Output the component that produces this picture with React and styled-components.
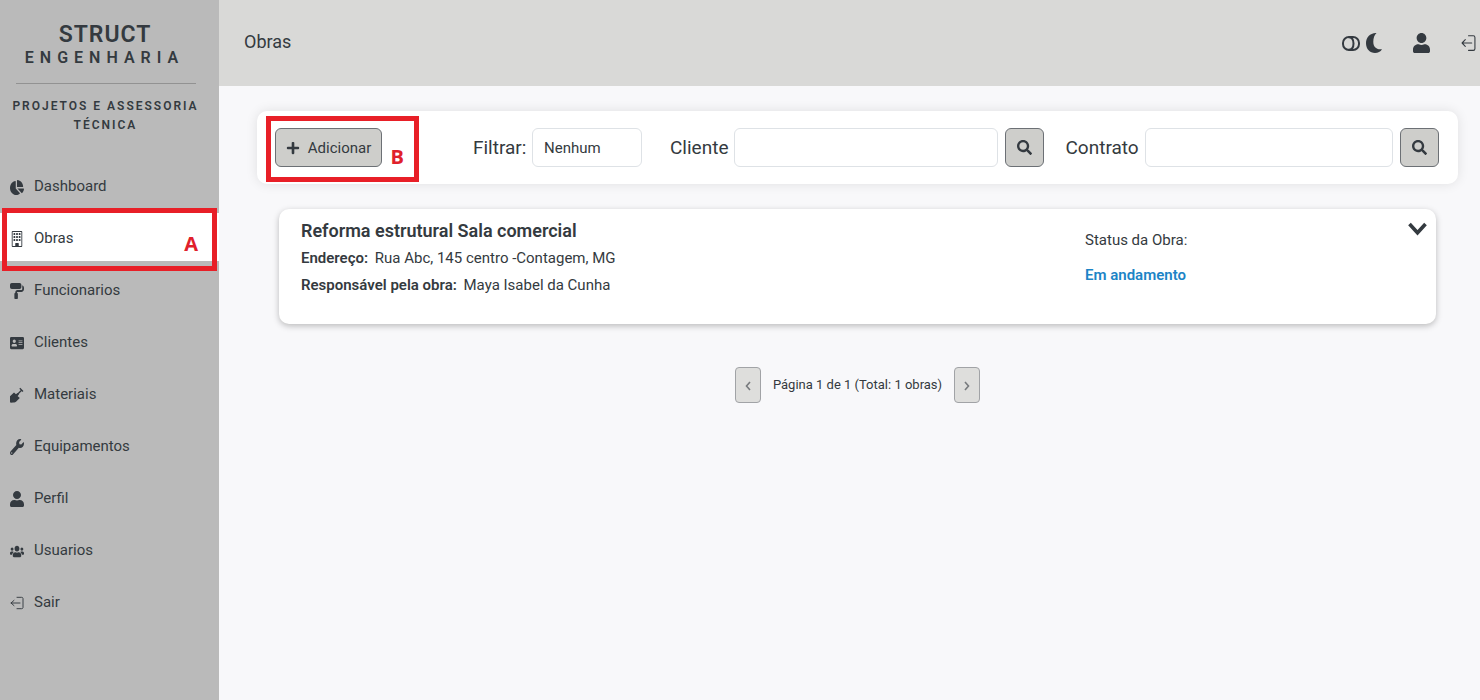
import React from "react";
import styled, { createGlobalStyle } from "styled-components";
import {
  FaAddressCard,
  FaChartPie,
  FaPlus,
  FaSearch,
  FaUser,
  FaUsers,
  FaWrench,
} from "react-icons/fa";
import { FaPaintRoller } from "react-icons/fa6";
import { BsBuilding } from "react-icons/bs";

const GlobalStyle = createGlobalStyle`
  *, *::before, *::after { box-sizing: border-box; }
  body {
    margin: 0;
    background: #f8f8fa;
    color: #343a40;
    font-family: Roboto, sans-serif;
    font-size: 15px;
    line-height: 24px;
  }
  button, input, select { font: inherit; color: inherit; }
  h1, h2, p { margin: 0; }
`;

const Layout = styled.div`
  display: flex;
  min-height: 100vh;
`;

const Sidebar = styled.aside`
  position: relative;
  flex: 0 0 219px;
  background: #bababa;
`;

const Brand = styled.div`
  height: 161px;
  padding-top: 25px;
  text-align: center;
`;

const BrandName = styled.p`
  padding-right: 9px;
  font-size: 23px;
  line-height: 20px;
  font-weight: 600;
  letter-spacing: 1px;
`;

const BrandSub = styled.p`
  padding: 3px 10px 0 0;
  font-size: 16px;
  line-height: 20px;
  font-weight: 600;
  letter-spacing: 6px;
`;

const BrandRule = styled.hr`
  width: 180px;
  margin: 15px 0 13px 16px;
  border: 0;
  border-top: 1px solid #929292;
`;

const Tagline = styled.p`
  padding-right: 8px;
  font-size: 12px;
  line-height: 19px;
  font-weight: 600;
  letter-spacing: 2px;
`;

const Nav = styled.nav`
  display: flex;
  flex-direction: column;
`;

const NavLink = styled.a`
  display: flex;
  align-items: center;
  gap: 10px;
  height: 48px;
  margin-bottom: 4px;
  padding: 4px 10px 0;
  color: inherit;
  text-decoration: none;
  background: ${(p) => (p.$active ? "#fff" : "transparent")};
  span { padding-bottom: 3px; }
`;

const Icon = styled.svg`
  flex: none;
  width: ${(p) => p.$width}px;
  height: ${(p) => p.$height}px;
`;

const Content = styled.div`
  flex: 1;
  min-width: 0;
`;

const Header = styled.header`
  display: flex;
  align-items: center;
  justify-content: space-between;
  height: 86px;
  padding: 0 4px 0 25px;
  background: #d9d9d7;
`;

const Title = styled.h1`
  padding-bottom: 3px;
  font-size: 18px;
  font-weight: 400;
`;

const HeaderActions = styled.div`
  display: flex;
  align-items: center;
  gap: 31px;
`;

const IconButton = styled.button`
  display: flex;
  align-items: center;
  gap: 6px;
  padding: 0;
  border: 0;
  background: none;
`;

const Main = styled.main`
  padding: 25px 22px 0 38px;
`;

const Toolbar = styled.section`
  display: flex;
  align-items: center;
  position: relative;
  height: 73px;
  padding: 0 19px 0 18px;
  background: #fff;
  border-radius: 10px;
  box-shadow: 0 0 12px rgba(0, 0, 0, 0.1);
`;

const Button = styled.button`
  display: flex;
  align-items: center;
  justify-content: center;
  gap: 8px;
  flex: none;
  width: ${(p) => p.$width}px;
  height: 39px;
  padding: 0;
  border: 1px solid #6c7075;
  border-radius: 6px;
  background: #cececb;
`;

const Field = styled.div`
  display: flex;
  align-items: center;
  flex: ${(p) => (p.$grow ? "1 1 0" : "none")};
  min-width: 0;
  margin-left: ${(p) => p.$gap}px;
`;

const Label = styled.label`
  flex: none;
  width: ${(p) => p.$width}px;
  font-size: 19px;
`;

const Select = styled.select`
  appearance: none;
  width: 110px;
  height: 39px;
  padding: 0 11px;
  border: 1px solid #dee2e6;
  border-radius: 6px;
  background: #fff;
`;

const Input = styled.input`
  flex: 1;
  min-width: 0;
  height: 39px;
  margin-right: 7px;
  padding: 0 12px;
  border: 1px solid #dee2e6;
  border-radius: 6px;
  background: #fff;
`;

const Card = styled.article`
  display: flex;
  align-items: flex-start;
  min-height: 115px;
  margin: 25px 22px 0;
  padding: 8px 9px 0 22px;
  background: #fff;
  border-radius: 10px;
  box-shadow: 0 2px 6px rgba(0, 0, 0, 0.25);
`;

const CardInfo = styled.div`
  flex: 1;
`;

const CardTitle = styled.h2`
  font-size: 18px;
  line-height: 28px;
  font-weight: 600;
`;

const CardLine = styled.p`
  line-height: 27px;
  strong { margin-right: 3px; font-weight: 600; }
`;

const CardStatus = styled.div`
  width: 323px;
  padding-top: 6px;
  line-height: 35px;
`;

const Status = styled.p`
  color: #1c84c6;
  font-weight: 600;
`;

const ExpandButton = styled(IconButton)`
  padding-top: 5px;
`;

const Pager = styled.nav`
  display: flex;
  align-items: center;
  justify-content: center;
  gap: 12px;
  margin-top: 43px;
  font-size: 13px;
`;

const PageButton = styled.button`
  display: flex;
  align-items: center;
  justify-content: center;
  width: 26px;
  height: 36px;
  padding: 2px 0 0;
  border: 1px solid #a1a3a6;
  border-radius: 4px;
  background: #dededc;
  color: #777a7d;
`;

const Highlight = styled.div`
  position: absolute;
  z-index: 1;
  left: ${(p) => p.$left}px;
  top: ${(p) => p.$top}px;
  width: ${(p) => p.$width}px;
  height: ${(p) => p.$height}px;
  border: 5px solid #e81f27;
  pointer-events: none;
`;

const Marker = styled.b`
  position: absolute;
  right: ${(p) => p.$right}px;
  bottom: ${(p) => p.$bottom}px;
  color: #e0202b;
  font: 700 20px/24px "Open Sans", sans-serif;
`;

const ShovelIcon = (props) => (
  <svg viewBox="0 0 14 16" fill="currentColor" aria-hidden="true" {...props}>
    <path d="M0 9.2 4 5.4l2 1.9 1.400-1.400 1.600 1.500-1.500 1.500 2.300 2-3.800 3.900c-1.400.9-4 1-6 .8Z" />
    <path d="M5 10 11.500 3.200M9.800 1.300l3.200 3.200" fill="none" stroke="currentColor" strokeWidth="1.300" />
  </svg>
);

const ExitIcon = (props) => (
  <svg
    viewBox="0 0 14 16"
    fill="none"
    stroke="currentColor"
    strokeLinecap="round"
    strokeLinejoin="round"
    aria-hidden="true"
    {...props}
  >
    <path d="M7 1.500h4.500c1 0 1.500.5 1.500 1.500v10c0 1-.5 1.500-1.500 1.500H7M10 8H1M4 5 1 8l3 3" />
  </svg>
);

const ToggleIcon = () => (
  <svg width="18" height="15" viewBox="0 0 18 15" fill="none" stroke="currentColor" strokeWidth="2" aria-hidden="true">
    <rect x="1" y="1" width="16" height="13" rx="6" />
    <path d="M6.500 1.200C9.800 1.200 11.500 4 11.500 7.500S9.800 13.800 6.500 13.800" />
  </svg>
);

const MoonIcon = () => (
  <svg width="16" height="20" viewBox="0 0 16 20" fill="currentColor" aria-hidden="true">
    <path d="M10.500 0C4.300-.2 0 4.300 0 10.200 0 16 4 20 9 20c3 0 5.500-1.200 7-3.800-5.500.8-8.700-2.200-8.700-7.400 0-3.700 1-6.700 3.200-8.800Z" />
  </svg>
);

const ChevronIcon = ({ d }) => (
  <svg width="6" height="10" viewBox="0 0 6 10" fill="none" stroke="currentColor" strokeWidth="1.600" aria-hidden="true">
    <path d={d} />
  </svg>
);

const links = [
  ["Dashboard", FaChartPie, 15],
  ["Obras", BsBuilding, 16],
  ["Funcionarios", FaPaintRoller, 16],
  ["Clientes", FaAddressCard, 14],
  ["Materiais", ShovelIcon, 16],
  ["Equipamentos", FaWrench, 16],
  ["Perfil", FaUser, 16],
  ["Usuarios", FaUsers, 13],
  ["Sair", ExitIcon, 14],
];

export default function App() {
  return (
    <Layout>
      <GlobalStyle />
      <Sidebar>
        <Brand>
          <BrandName>STRUCT</BrandName>
          <BrandSub>ENGENHARIA</BrandSub>
          <BrandRule />
          <Tagline>PROJETOS E ASSESSORIA TÉCNICA</Tagline>
        </Brand>
        <Nav>
          {links.map(([name, icon, height]) => (
            <NavLink key={name} href="#" $active={name === "Obras"}>
              <Icon as={icon} $width={14} $height={height} preserveAspectRatio="none" />
              <span>{name}</span>
            </NavLink>
          ))}
        </Nav>
        <Highlight $left={2} $top={208} $width={215} $height={63}>
          <Marker $right={14} $bottom={10}>A</Marker>
        </Highlight>
      </Sidebar>
      <Content>
        <Header>
          <Title>Obras</Title>
          <HeaderActions>
            <IconButton aria-label="Tema"><ToggleIcon /><MoonIcon /></IconButton>
            <IconButton aria-label="Perfil">
              <Icon as={FaUser} $width={17} $height={20} preserveAspectRatio="none" />
            </IconButton>
            <IconButton aria-label="Sair">
              <Icon as={ExitIcon} $width={15} $height={18} preserveAspectRatio="none" />
            </IconButton>
          </HeaderActions>
        </Header>
        <Main>
          <Toolbar>
            <Button $width={107}><FaPlus size={14} />Adicionar</Button>
            <Highlight $left={9} $top={5} $width={153} $height={66}>
              <Marker $right={10} $bottom={8}>B</Marker>
            </Highlight>
            <Field $gap={91}>
              <Label htmlFor="filtro" $width={59}>Filtrar:</Label>
              <Select id="filtro"><option>Nenhum</option></Select>
            </Field>
            <Field $gap={28} $grow>
              <Label htmlFor="cliente" $width={64}>Cliente</Label>
              <Input id="cliente" />
              <Button $width={39} aria-label="Buscar cliente"><FaSearch size={15} /></Button>
            </Field>
            <Field $gap={22} $grow>
              <Label htmlFor="contrato" $width={79}>Contrato</Label>
              <Input id="contrato" />
              <Button $width={39} aria-label="Buscar contrato"><FaSearch size={15} /></Button>
            </Field>
          </Toolbar>
          <Card>
            <CardInfo>
              <CardTitle>Reforma estrutural Sala comercial</CardTitle>
              <CardLine><strong>Endereço:</strong> Rua Abc, 145 centro -Contagem, MG</CardLine>
              <CardLine><strong>Responsável pela obra:</strong> Maya Isabel da Cunha</CardLine>
            </CardInfo>
            <CardStatus>
              <p>Status da Obra:</p>
              <Status>Em andamento</Status>
            </CardStatus>
            <ExpandButton aria-label="Expandir">
              <svg width="19" height="14" viewBox="0 0 19 14" fill="none" stroke="currentColor" strokeWidth="3.600" aria-hidden="true">
                <path d="m1.500 2 8 8.800 8-8.800" />
              </svg>
            </ExpandButton>
          </Card>
          <Pager aria-label="Paginação">
            <PageButton aria-label="Anterior"><ChevronIcon d="M5 1 1.500 5 5 9" /></PageButton>
            <span>Página 1 de 1 (Total: 1 obras)</span>
            <PageButton aria-label="Próxima"><ChevronIcon d="M1 1 4.500 5 1 9" /></PageButton>
          </Pager>
        </Main>
      </Content>
    </Layout>
  );
}
